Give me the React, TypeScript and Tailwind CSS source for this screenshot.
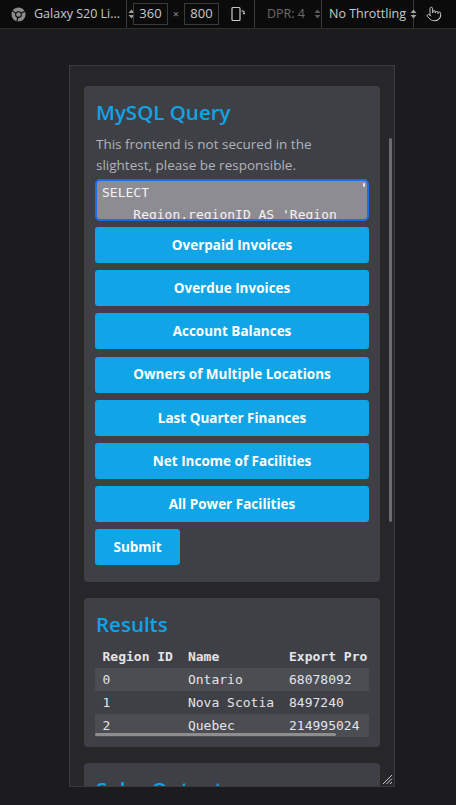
import { Pointer } from "lucide-react";

const queries = [
  "Overpaid Invoices",
  "Overdue Invoices",
  "Account Balances",
  "Owners of Multiple Locations",
  "Last Quarter Finances",
  "Net Income of Facilities",
  "All Power Facilities",
];

const rows = [
  ["0", "Ontario", "68078092"],
  ["1", "Nova Scotia", "8497240"],
  ["2", "Quebec", "214995024"],
];

const ui = { fontFamily: '"Open Sans", "Noto Sans", sans-serif' };
const mono = { fontFamily: '"DejaVu Sans Mono", "Liberation Mono", monospace' };

function UpDown({ dim }: { dim?: boolean }) {
  return (
    <svg width="7" height="10" viewBox="0 0 7 10" className="shrink-0">
      <path d="M3.5 0.5 L6.5 4 H0.5 Z M3.5 9.5 L6.5 6 H0.5 Z" fill={dim ? "#5a5a5a" : "#a0a0a0"} />
    </svg>
  );
}

function ChromeLogo() {
  return (
    <svg width="15" height="15" viewBox="0 0 16 16" className="shrink-0">
      <circle cx="8" cy="8" r="7.5" fill="#8c8c8c" />
      <path d="M8 8 L14.8 4.6 M8 8 L1.6 4.4 M8 8 L6.3 15.4" stroke="#0b0b0b" strokeWidth="1.2" />
      <circle cx="8" cy="8" r="3.6" fill="#0b0b0b" />
      <circle cx="8" cy="8" r="2.5" fill="#8c8c8c" />
    </svg>
  );
}

function Toolbar() {
  return (
    <div className="flex h-[29px] shrink-0 items-center border-b border-[#2d2d2f] bg-[#0b0b0b] text-[12.5px] text-[#c6c9cd]" style={ui}>
      <div className="flex h-full w-[127px] items-center gap-[8px] border-r border-[#3a3a3a] pl-[11px]">
        <ChromeLogo />
        <span className="whitespace-nowrap">Galaxy S20 Li...</span>
        <UpDown />
      </div>
      <div className="flex h-full w-[128px] items-center border-r border-[#3a3a3a] pl-[6px]">
        <div className="flex h-[22px] w-[35px] items-center justify-center border border-[#3c3c3c] text-[13px]">360</div>
        <span className="w-[16px] text-center text-[11px] text-[#8a8a8a]">×</span>
        <div className="flex h-[22px] w-[35px] items-center justify-center border border-[#3c3c3c] text-[13px]">800</div>
        <svg width="14" height="16" viewBox="0 0 14 16" className="ml-[12px]">
          <rect x="1" y="1.5" width="8" height="13" rx="1" fill="none" stroke="#c6c9cd" strokeWidth="1.2" />
          <path d="M10.5 5 h2.5 v3 M11.8 6.8 l1.2 1.4 l1 -1.4" fill="none" stroke="#c6c9cd" strokeWidth="1" />
        </svg>
      </div>
      <div className="flex h-full w-[67px] items-center gap-[9px] border-r border-[#3a3a3a] pl-[12px] text-[#6b6b6b]">
        <span className="whitespace-nowrap">DPR: 4</span>
        <UpDown dim />
      </div>
      <div className="flex h-full w-[92px] items-center gap-[4px] border-r border-[#3a3a3a] pl-[7px]">
        <span className="whitespace-nowrap">No Throttling</span>
        <UpDown />
      </div>
      <div className="flex h-full flex-1 items-center justify-center pr-[2px]">
        <Pointer size={16} strokeWidth={1.4} color="#c6c9cd" />
      </div>
    </div>
  );
}

function Card({ title, children, pb = "pb-[17px]" }: { title: string; children?: React.ReactNode; pb?: string }) {
  return (
    <section className={`shrink-0 rounded-[4px] bg-[#3f4046] px-[11px] pt-[12px] ${pb}`}>
      <h2 className="pl-[1px] text-[20.5px] font-semibold leading-[28px] text-[#11a3e6]">{title}</h2>
      {children}
    </section>
  );
}

export default function App() {
  return (
    <div className="flex h-[805px] w-[456px] flex-col overflow-hidden bg-[#1c1c1e]" style={ui}>
      <Toolbar />
      <div className="pl-[69px] pt-[36px]">
        <div className="relative h-[722px] w-[326px] overflow-hidden border border-[#3b3b3d] bg-[#27272a]">
          <div className="flex flex-col gap-[16px] px-[14px] pt-[20px]">
            <Card title="MySQL Query">
              <p className="mt-[8px] pl-[1px] text-[13.5px] leading-[21px] text-[#b3b3b9]">
                This frontend is not secured in the slightest, please be responsible.
              </p>
              <div className="relative mt-[3px] h-[42px] overflow-hidden rounded-[5px] border-2 border-[#1c6de6] bg-[#8e8c93] pl-[5px] pt-[1px] text-[13px] leading-[21.5px] text-[#f2f2f2] whitespace-pre" style={mono}>
                {"SELECT\n    Region.regionID AS 'Region"}
                <span className="absolute right-[2px] top-[2px] h-[4px] w-[2px] rounded-full bg-[#e8e8e8]" />
              </div>
              <div className="mt-[6px] flex flex-col gap-[7.2px]">
                {queries.map((q) => (
                  <button key={q} type="button" className="h-[36px] w-full rounded-[3px] bg-[#0fa5e7] text-[13.5px] font-bold text-white">
                    {q}
                  </button>
                ))}
                <button type="button" className="h-[36px] w-[85px] rounded-[3px] bg-[#0fa5e7] text-[13.5px] font-bold text-white">
                  Submit
                </button>
              </div>
            </Card>

            <Card title="Results" pb="pb-[10px]">
              <div className="relative mt-[7px] overflow-hidden">
                <table className="border-collapse text-[13px] leading-[23px] text-[#e4e4e7] whitespace-nowrap" style={mono}>
                  <thead>
                    <tr className="text-left">
                      <th className="px-[7.5px] font-bold">Region ID</th>
                      <th className="px-[7.5px] font-bold">Name</th>
                      <th className="px-[7.5px] font-bold">Export Pro</th>
                    </tr>
                  </thead>
                  <tbody>
                    {rows.map((r, i) => (
                      <tr key={r[0]} className={i % 2 === 0 ? "bg-[#4c4d53]" : ""}>
                        {r.map((c, j) => (
                          <td key={j} className="px-[7.5px] font-normal">{c}</td>
                        ))}
                      </tr>
                    ))}
                  </tbody>
                </table>
                <div className="absolute bottom-[1px] left-0 h-[3px] w-[241px] rounded-full bg-[#8e8e8e]" />
              </div>
            </Card>

            <Card title="Solar Output" />
          </div>

          <div className="absolute right-[2px] top-[72px] h-[384px] w-[3px] rounded-full bg-[#6c6c6e]" />
          <svg width="11" height="11" viewBox="0 0 11 11" className="absolute bottom-[1px] right-[1px]">
            <path d="M10 1 L1 10 M10 4.5 L4.5 10 M10 8 L8 10" stroke="#c8c8c8" strokeWidth="1" />
          </svg>
        </div>
      </div>
    </div>
  );
}
